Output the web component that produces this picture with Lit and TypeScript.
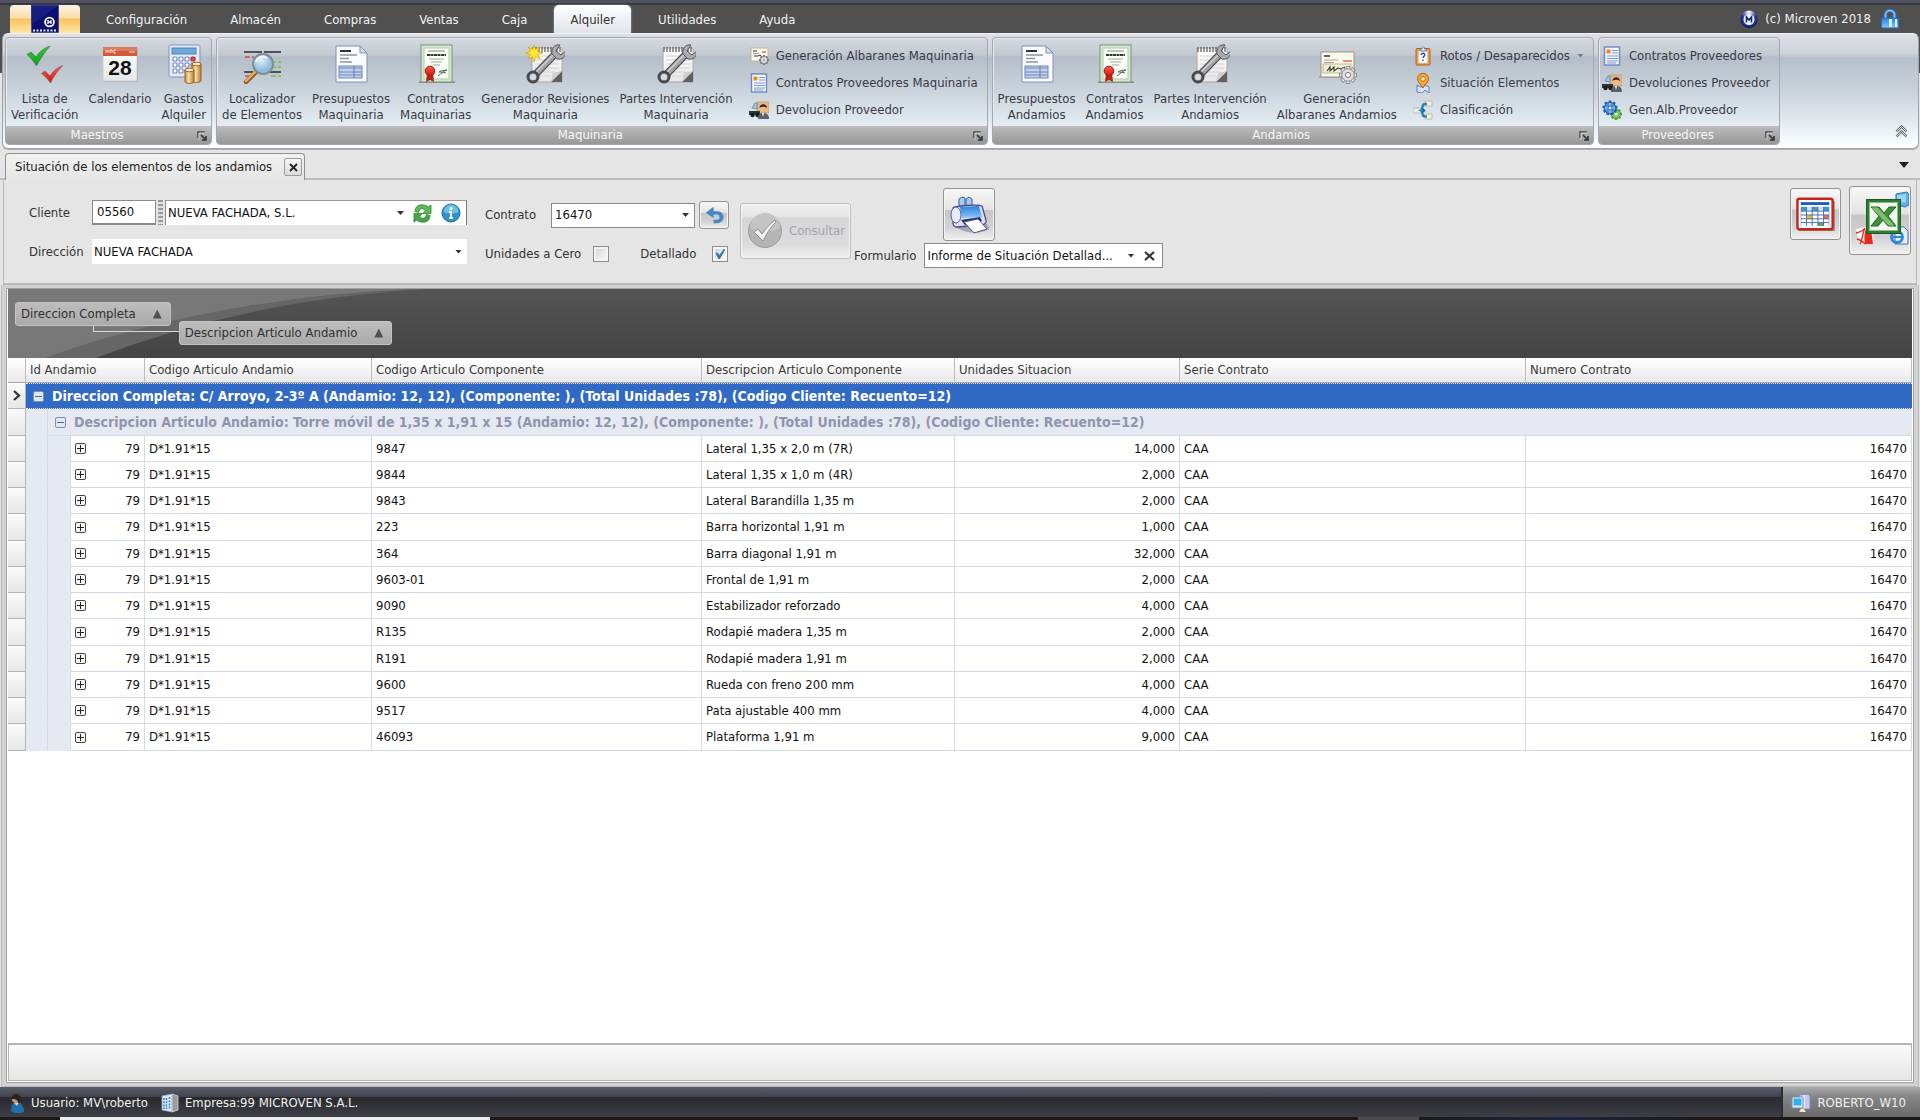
import { LitElement, html, svg, css, nothing, TemplateResult, SVGTemplateResult } from 'lit';
import { customElement, state } from 'lit/decorators.js';
import { classMap } from 'lit/directives/class-map.js';

interface Command { icon: string; lines: string[]; menu?: boolean; }
interface Group { title: string; large: Command[]; small: Command[]; }
interface Item { code: string; name: string; units: string; }

const MENU = ['Configuración', 'Almacén', 'Compras', 'Ventas', 'Caja', 'Alquiler', 'Utilidades', 'Ayuda'];

const GROUPS: Group[] = [
  {
    title: 'Maestros',
    large: [
      { icon: 'checks', lines: ['Lista de', 'Verificación'] },
      { icon: 'calendar', lines: ['Calendario'] },
      { icon: 'expenses', lines: ['Gastos', 'Alquiler'] },
    ],
    small: [],
  },
  {
    title: 'Maquinaria',
    large: [
      { icon: 'locator', lines: ['Localizador', 'de Elementos'] },
      { icon: 'quote', lines: ['Presupuestos', 'Maquinaria'] },
      { icon: 'contract', lines: ['Contratos', 'Maquinarias'] },
      { icon: 'wrenchNew', lines: ['Generador Revisiones', 'Maquinaria'] },
      { icon: 'wrench', lines: ['Partes Intervención', 'Maquinaria'] },
    ],
    small: [
      { icon: 'noteSmall', lines: ['Generación Albaranes Maquinaria'] },
      { icon: 'listSmall', lines: ['Contratos Proveedores Maquinaria'] },
      { icon: 'supplier', lines: ['Devolucion Proveedor'] },
    ],
  },
  {
    title: 'Andamios',
    large: [
      { icon: 'quote', lines: ['Presupuestos', 'Andamios'] },
      { icon: 'contract', lines: ['Contratos', 'Andamios'] },
      { icon: 'wrench', lines: ['Partes Intervención', 'Andamios'] },
      { icon: 'note', lines: ['Generación', 'Albaranes Andamios'] },
    ],
    small: [
      { icon: 'clipboard', lines: ['Rotos / Desaparecidos'], menu: true },
      { icon: 'pin', lines: ['Situación Elementos'] },
      { icon: 'tree', lines: ['Clasificación'] },
    ],
  },
  {
    title: 'Proveedores',
    large: [],
    small: [
      { icon: 'listSmall', lines: ['Contratos Proveedores'] },
      { icon: 'supplier', lines: ['Devoluciones Proveedor'] },
      { icon: 'gears', lines: ['Gen.Alb.Proveedor'] },
    ],
  },
];

const ITEMS: Item[] = [
  { code: '9847', name: 'Lateral 1,35 x 2,0 m (7R)', units: '14,000' },
  { code: '9844', name: 'Lateral 1,35 x 1,0 m (4R)', units: '2,000' },
  { code: '9843', name: 'Lateral Barandilla 1,35 m', units: '2,000' },
  { code: '223', name: 'Barra horizontal 1,91 m', units: '1,000' },
  { code: '364', name: 'Barra diagonal 1,91 m', units: '32,000' },
  { code: '9603-01', name: 'Frontal de 1,91 m', units: '2,000' },
  { code: '9090', name: 'Estabilizador reforzado', units: '4,000' },
  { code: 'R135', name: 'Rodapié madera 1,35 m', units: '2,000' },
  { code: 'R191', name: 'Rodapié madera 1,91 m', units: '2,000' },
  { code: '9600', name: 'Rueda con freno 200 mm', units: '4,000' },
  { code: '9517', name: 'Pata ajustable 400 mm', units: '4,000' },
  { code: '46093', name: 'Plataforma 1,91 m', units: '9,000' },
];

const gearTeeth = (cx: number, cy: number, r: number, n: number, fill: string, w: number) =>
  Array.from({ length: n }, (_, i) => svg`<rect x=${cx - w / 2} y=${cy - r} width=${w} height=${r} fill=${fill} transform="rotate(${(360 / n) * i} ${cx} ${cy})"/>`);

const notebook = svg`
  <path d="M7 4H37V38H7z" fill="url(#paper)" stroke="#a8a8a8"/>
  <path d="M8 3v5M11 3v5M14 3v5M17 3v5M20 3v5M23 3v5M26 3v5M29 3v5M32 3v5M35 3v5" stroke="#6b6b6b" stroke-width="1.4"/>
  <path d="M10 12h24M10 16h24M10 20h24M10 24h24M10 28h20M10 32h16" stroke="#d2d2d2"/>
  <path d="M37 27L26 38H37z" fill="#606060"/><path d="M37 27L26 38l2-9z" fill="#cfcfcf"/>
  <path d="M8 33L32 8" stroke="#4c4c50" stroke-width="7.5"/>
  <path d="M8 33L32 8" stroke="#a3a3a9" stroke-width="5"/>
  <path d="M8 31L31 8" stroke="#d0d0d5" stroke-width="1.4"/>
  <path d="M35 1c-6-1-9 4-8 9l5 5c5 1 9-2 9-8l-5 4-5-4z" fill="#aaaab0" stroke="#55555a"/>
  <circle cx="8" cy="33" r="5" fill="#c9cbd0" stroke="#4a4a4e" stroke-width="3"/>
  <circle cx="8" cy="33" r="2.6" fill="#d9dde2"/>`;

const ICONS: Record<string, SVGTemplateResult> = {
  checks: svg`
    <path d="M2 10.500L6 8l5 5C14 8 19 4 25 2 20 8 15 15 11.500 22 9 18 6 14 2 10.500z" fill="url(#green)" stroke="#4b7f4b" stroke-width=".7"/>
    <path d="M16.500 29.500L20 27l5 5c3-5 7-8 12.500-10.500C33 27 28.500 32 25.500 39 23 35 20 32 16.500 29.500z" fill="url(#red)" stroke="#a05050" stroke-width=".7"/>`,
  calendar: svg`
    <path d="M3 4H38V38H3z" fill="#8a8d92" opacity=".5"/>
    <path d="M3 3H37V37H3z" fill="url(#paper)" stroke="#c9c9c9" stroke-width=".8"/>
    <path d="M3 3H37V12H3z" fill="#cf5a3c"/><path d="M3 3H37V7H3z" fill="#de7a5e"/>
    <path d="M6 6v3M8 6v3M7 7h1M10 6v3M12 6v3M10 6h2M14 6h2M14 9h2M14 6v3M29 8h6" stroke="#f7d8cf"/>
    <text x="20" y="31" text-anchor="middle" font-family="Liberation Sans, sans-serif" font-weight="bold" font-size="21" fill="#111">28</text>`,
  expenses: svg`
    <rect x="5" y="1" width="31" height="32" rx="1.5" fill="#e4eaf6" stroke="#7d93c2"/>
    <rect x="8" y="4" width="24" height="6" fill="#6fa8d8" stroke="#4a86bd"/>
    ${[13, 19, 25].map((y) => [9, 15, 21, 27].map((x) => svg`<rect x=${x} y=${y} width="4" height="4" rx="1" fill=${x === 27 && y === 13 ? '#e04848' : '#fff'} stroke=${x === 27 && y === 13 ? '#b03030' : '#7389bd'} stroke-width="1.2"/>`))}
    <path d="M28 20v17c2 2 7 2 9 0V20z" fill="url(#gold)" stroke="#96662c"/><ellipse cx="32.500" cy="20" rx="4.500" ry="1.800" fill="#ffe9b0" stroke="#96662c"/>
    <path d="M21 26v12c2 2 7 2 9 0V26z" fill="url(#gold)" stroke="#96662c"/><ellipse cx="25.500" cy="26" rx="4.500" ry="1.800" fill="#ffe9b0" stroke="#96662c"/>`,
  locator: svg`
    <path d="M2 8h18M22 8h17M2 28h9M28 28h11" stroke="#2b2b2b" stroke-width="1.500"/>
    <path d="M3 13h9M3 32h6" stroke="#d84848" stroke-width="1.500" stroke-dasharray="5 2"/>
    <path d="M29 18h10M29 23h10M29 32h10" stroke="#72c83c" stroke-width="1.600" stroke-dasharray="5 2"/>
    <path d="M14 28L4 38" stroke="#8d5a20" stroke-width="4.500" stroke-linecap="round"/><path d="M14 27L4 37" stroke="#e0a85c" stroke-width="2.500" stroke-linecap="round"/>
    <circle cx="21" cy="20" r="10" fill="url(#lens)" stroke="#7f8c99" stroke-width="2"/>
    <path d="M14 18c1-5 7-7 11-4" stroke="#fff" stroke-width="2" fill="none" opacity=".8"/>`,
  quote: svg`
    <path d="M5 2H29l7 7V38H5z" fill="#f9fbff" stroke="#7f90b8"/>
    <path d="M29 2v7h7z" fill="#d5dded" stroke="#7f90b8"/>
    <path d="M9 7h11" stroke="#333" stroke-width="2"/><path d="M9 11h17M9 14.500h9M9 18h12" stroke="#8f959f" stroke-width="1.400"/>
    <rect x="8" y="22" width="23" height="12" fill="#c3d0ea" stroke="#7188bb"/>
    <path d="M8 24h23M8 28h23M8 31h23M23 22v12" stroke="#7188bb" stroke-width="1.200"/>`,
  contract: svg`
    <path d="M3 38h36" stroke="#7d8690" stroke-width="1.500"/>
    <rect x="5" y="1" width="31" height="37" fill="#d8e8d4" stroke="#6f9470"/>
    <rect x="8" y="4" width="25" height="31" fill="#fafdf8" stroke="#abc9a8"/>
    <path d="M12 7h17" stroke="#7c8a7c"/><path d="M11 11h19" stroke="#28402a" stroke-width="2.200" stroke-dasharray="3 .5"/>
    <path d="M13 15h15M15 18h11M17 21h7" stroke="#9aa79a" stroke-width="1.200"/>
    <path d="M22 32c4-3 6-5 9-6-3 0-7 1-8 2 2 0 4 0 7 1" stroke="#4f6350" fill="none"/>
    <path d="M11 28l-1 10 4-2 4 2-1-10z" fill="#b92417"/>
    <circle cx="14" cy="27" r="4.800" fill="url(#red)" stroke="#9c1d14"/>`,
  wrench: notebook,
  wrenchNew: svg`${notebook}
    <path d="M9 1l1.500 4.500L15 3l-2.500 4.500L18 9l-5.500 1.500L15 15l-4.500-2.500L9 18l-1.500-5.500L3 15l2.500-4.500L0 9l5.500-1.500L3 3l4.500 2.500z" fill="#ffe93a" stroke="#d8a800" stroke-width=".8"/>`,
  note: svg`
    <path d="M2 33h36" stroke="#909090"/>
    <rect x="4" y="8" width="33" height="25" fill="#fbf9ee" stroke="#98957e"/>
    <path d="M7 12h6" stroke="#333" stroke-width="1.600"/><path d="M7 16h14M7 18.500h10" stroke="#aaa68e"/><path d="M26 17h9" stroke="#f08a80" stroke-width="1.800"/>
    <rect x="6" y="20" width="28" height="9" fill="#f1ecd2" stroke="#bdb893"/>
    <path d="M10 27l3-4 0 4 4-4 0 4 4-3 3 1 4-2" stroke="#333" fill="none" stroke-width="1.100"/>
    ${gearTeeth(31, 31, 9, 8, '#8a8a8a', 4.4)}${gearTeeth(31, 31, 8, 8, '#e8e8e8', 2.8)}
    <circle cx="31" cy="31" r="6.300" fill="#dedede" stroke="#8a8a8a"/><circle cx="31" cy="31" r="2.500" fill="#fff" stroke="#777"/>`,
  noteSmall: svg`
    <rect x="2" y="2" width="17" height="13" fill="#fbf9ee" stroke="#b9b59a"/>
    <path d="M4 5h4M5 10h4l2-1 2 2" stroke="#333" fill="none"/><path d="M13 6h4" stroke="#ee6a5e" stroke-width="1.400"/><path d="M4 7.500h6" stroke="#999"/>
    ${gearTeeth(15, 14, 5, 8, '#7d7d7d', 2)}<circle cx="15" cy="14" r="3.500" fill="#e9e9e9" stroke="#777"/><circle cx="15" cy="14" r="1" fill="#888"/>`,
  listSmall: svg`
    <rect x="2.500" y="1" width="15" height="18" fill="#f3f7ff" stroke="#6c86c6" stroke-width="1.400"/>
    <rect x="4.500" y="3.500" width="4" height="4" fill="#ee8a1c"/>
    <path d="M10 4.500h6M10 7h6M5 10h11M5 12.500h11M5 15h11M5 17h9" stroke="#7f97cf"/>`,
  supplier: svg`
    <rect x="8" y="2" width="12" height="11" fill="#e3b987" stroke="#b78a58" stroke-width=".6"/>
    <path d="M3 8l3-5 2 0v6z" fill="#9cc6dd" stroke="#5e8ca8" stroke-width=".8"/>
    <path d="M0 11h11v4H0z" fill="#2e3338"/><circle cx="3.500" cy="15" r="2.200" fill="#1c1c1c"/><circle cx="8.500" cy="15" r="2.200" fill="#1c1c1c"/>
    <circle cx="14" cy="8.500" r="3.200" fill="#f0b98a"/><path d="M10.500 8c0-5 7.500-5 7.500 0-2-1-5-2-7.500 0z" fill="#38231a"/>
    <path d="M9 19c0-5 2-6 5-6s6 1 6 6z" fill="#5a5f68"/><path d="M13 13l1 4 1-4z" fill="#fff"/>`,
  clipboard: svg`
    <rect x="3" y="2.500" width="14" height="16.500" rx="1" fill="#e89a4a" stroke="#b8641c"/>
    <rect x="5.500" y="5" width="9" height="12" fill="#f6f8ff" stroke="#d9cbb8" stroke-width=".6"/>
    <path d="M7 5V3h2c0-3 2.500-3 2.500 0h2v2z" fill="#e4e8f2" stroke="#6a76a0" stroke-width=".9"/>
    <path d="M8.200 9c0-2.500 3.800-2.300 3.600 0 0 1.500-1.800 1.300-1.800 3M10 13.500v1.500" stroke="#2a4fb0" stroke-width="1.400" fill="none"/>`,
  pin: svg`
    <path d="M4 12l4 2 4-2 4 2v6l-4-3-3 3-5-1z" fill="#d5e2f4" stroke="#5c7fb8"/>
    <path d="M10 15C7 10 4.500 9 4.500 5.800a5.500 5.500 0 0 1 11 0C15.500 9 13 10 10 15z" fill="#f5a93a" stroke="#a8630e"/>
    <circle cx="10" cy="6" r="2.300" fill="#fff3d6" stroke="#b8700e"/>`,
  tree: svg`
    <path d="M0 8h8v5H0z" fill="#eceee4" stroke="#b0b4a6" stroke-width=".8"/><path d="M12 1h7v5h-7zM12 14h7v5h-7z" fill="#f4efdc" stroke="#b8b296" stroke-width=".8"/>
    <path d="M14 4h-2c-4 0-1.500 5.500-4 6.500 2.500 1 0 6 4 6h2" stroke="#2488b8" stroke-width="2.400" fill="none"/><path d="M9 7.500l4 3-4 3z" fill="#1b6fa5"/>`,
  gears: svg`
    ${gearTeeth(14, 14, 6, 8, '#4d9c34', 2.4)}<circle cx="14" cy="14" r="4.500" fill="#7ccb58" stroke="#3f8a2a" stroke-width=".8"/><circle cx="14" cy="14" r="1.600" fill="#eaf7e2"/>
    ${gearTeeth(8, 8, 7.5, 9, '#2563b4', 2.6)}<circle cx="8" cy="8" r="5.800" fill="#4a8fdc" stroke="#1c4f98" stroke-width=".8"/><path d="M8 3v10M3 8h10" stroke="#bcdcff"/><circle cx="8" cy="8" r="2" fill="#fff" stroke="#2a62b0"/>`,
  logo: svg`
    <rect x="0" y="0" width="28" height="28" fill="#0a0f72" stroke="#8b8fb4"/>
    <path d="M0 0H28L0 20z" fill="#1e2a8c" opacity=".6"/>
    <circle cx="18.500" cy="17" r="4.400" fill="#0a0f72" stroke="#fff" stroke-width="1.800"/><path d="M17 19v-4M20 19v-4M17 17h3" stroke="#fff" stroke-width="1.300"/>
    <path d="M2 25.500h24" stroke="#e8e8f5" stroke-width="1.800" stroke-dasharray="2 1.500"/>`,
  brand: svg`
    <circle cx="10" cy="10.500" r="8.500" fill="#0d1a58"/><circle cx="10" cy="9.500" r="8" fill="url(#ball)"/>
    <circle cx="10" cy="10.500" r="5.500" fill="#eef1fb"/><path d="M7.500 13.500V8l2.500 3 2.500-3v5.500" stroke="#15267a" stroke-width="1.600" fill="none"/>`,
  lock: svg`
    <path d="M5.500 10V6a4.500 4.500 0 0 1 9 0V10" stroke="#2f78c4" stroke-width="3.600" fill="none"/><path d="M5.500 10V6a4.500 4.500 0 0 1 9 0V10" stroke="#8cc8f4" stroke-width="1.600" fill="none"/>
    <rect x="1.500" y="9" width="17" height="10" rx="1.500" fill="url(#blue)" stroke="#2272b8"/><path d="M9 10h3v8H9zM15 10h2v8h-2z" fill="#d9f0ff"/>`,
  launcher: svg`<path d="M1 7V1h7" stroke="#444" fill="none" stroke-width="1.400"/><path d="M4 4l5 5M9 5v4H5" stroke="#333" fill="none" stroke-width="1.600"/><path d="M2 8.500V2h6.500" stroke="#e8e8e8" fill="none" stroke-width=".7"/>`,
  refresh: svg`
    <path d="M2 8C2 3 6 0 11 1c2 0 4 1 5 2l3-2v9h-9l3-3C10 4 7 4 6 9z" fill="#5cb85a" stroke="#2d8a35" stroke-width=".8"/>
    <path d="M18 12c0 5-4 8-9 7-2 0-4-1-5-2l-3 2v-9h9l-3 3c3 3 6 3 7-2z" fill="#43a346" stroke="#2d8a35" stroke-width=".8"/>`,
  info: svg`
    <circle cx="10" cy="10" r="9" fill="#2f93c9" stroke="#1d6a98"/><path d="M2.500 9a7.500 7.500 0 0 1 15 0c-5 2-10 2-15 0z" fill="#6cc0e6"/>
    <circle cx="10" cy="5.500" r="1.500" fill="#fff"/><path d="M8 9h3M10 8.500V15M8 15h4" stroke="#fff" stroke-width="1.800" fill="none"/>`,
  undo: svg`<path d="M11 1L2 8l9 6v-4h4c4 0 4 6 0 6h-4v4h5c9-1 9-14-1-14h-4z" fill="#4a86c5"/>`,
  confirm: svg`
    <circle cx="18" cy="18" r="16.500" fill="#b4b4b4" stroke="#9a9a9a"/><path d="M3 15a15 15 0 0 1 30 0c-9 4-21 5-30 0z" fill="#c4c4c4"/>
    <path d="M7 19l4-3 4 5C19 15 23 11 28 7l1 2c-6 6-9 11-13 19z" fill="#f1f1f1" stroke="#8d8d8d" stroke-width="1"/>`,
  printer: svg`
    <path d="M7 31c7 6 24 8 34 2l-4-6z" fill="#6f6f8c" opacity=".5"/>
    <path d="M10 14V3l3-2 3 1v9M17 11V3l3-2 3 2v10z" fill="#a8cbf2" stroke="#3c5ea0"/>
    <path d="M4 12c2-2 24-4 29-2l4 14c1 3-2 5-5 5L8 31c-3 0-4-2-4-4z" fill="#dcdff4" stroke="#4a4a88" stroke-width="1.300"/>
    <path d="M11 11l19-1 3 11-20 1z" fill="url(#blue)"/>
    <ellipse cx="7" cy="19" rx="5" ry="8" fill="#e9ebfb" stroke="#5a5a98"/>
    <path d="M12 24l19-3 2 4-17 4z" fill="#28306a"/>
    <path d="M15 26l14-3 9 10-13 4z" fill="#fafaff" stroke="#56568c"/>`,
  schedule: svg`
    <path d="M3 34.500h37V4" stroke="#6a3a34" stroke-width="1.500" fill="none" opacity=".6"/>
    <rect x="1.500" y="1.500" width="37" height="32" rx="2" fill="#fff" stroke="#c4281c" stroke-width="2.600"/>
    <rect x="5" y="5" width="30" height="3" fill="#1e5cb8"/><rect x="5" y="10" width="30" height="20" fill="#4a6fb0"/>
    ${[10, 15, 19, 23, 27].map((y, r) => [5, 11, 17, 23, 29].map((x, c) => svg`<rect x=${x + 0.5} y=${y} width="5" height=${r === 0 ? 4 : 3} fill=${r === 0 ? (c % 2 ? '#cfe4f4' : '#3d9bc4') : r === 2 && c === 1 ? '#e8c020' : r === 2 && c === 4 ? '#ee6a5e' : r === 4 && c === 3 ? '#58b040' : '#fff'}/>`))}`,
  exporter: svg`
    <path d="M45 3l11-2 2 2v11l-4 2-9-2z" fill="#5cb0e8" stroke="#2d78b8"/><path d="M46 4l9-1v8l-9 1z" fill="#9ad6fa"/>
    <path d="M5 38l9-2 8 1v16H8z" fill="#fff" stroke="#ddd" stroke-width=".6"/><path d="M15 38l5 0 2 15-8 0c-1-6-1-10 1-15z" fill="#e8291c"/><path d="M5 42c4-1 8-3 9-5-3 6-2 11-5 16M6 48c3 1 6 2 8 5" stroke="#e8291c" stroke-width="1.400" fill="none"/>
    <path d="M44 36h9l4 4v13H44z" fill="#e8f0ff" stroke="#4a6cb8"/><circle cx="46" cy="46" r="5.500" fill="none" stroke="#3088d8" stroke-width="2.800"/><path d="M41 46h10" stroke="#3088d8" stroke-width="2"/>
    <rect x="15.500" y="8.500" width="34" height="34" fill="#2f7d34" stroke="#1f5a24"/><rect x="18.500" y="11.500" width="28" height="28" fill="#f2f8ef" stroke="#8ab888"/>
    <path d="M20 16h8l5 6 5-6h7l-8 9 8 10h-8l-5-6-5 6h-7l8-10z" fill="#3f8f3c" stroke="#246428"/><path d="M20.500 16.500h6l17 18h-6z" fill="#7cbf6c"/>`,
  person: svg`<path d="M2 18c0-6 2-9 6-9s7 4 7 10c-4 2-10 2-13-1z" fill="#1f6fa8"/><path d="M5 10l3 3 2-4z" fill="#c8d4de"/><circle cx="7" cy="6" r="4" fill="#c79270"/><path d="M3 6c-1-6 8-7 9-1 0 3-1 5-3 5 0-3-2-4-6-4z" fill="#2e2018"/>`,
  company: svg`<path d="M1 3l10-2v18L1 17z" fill="#dfe9f5" stroke="#8fa5bf" stroke-width=".8"/><path d="M11 1l6 2v14l-6 2z" fill="#9c9c9c" stroke="#d8d8d8" stroke-width=".8"/><path d="M3 5v11M5.500 5v11M8.500 4v12" stroke="#3a86cc" stroke-width="1.600" stroke-dasharray="2 1.200"/>`,
  machine: svg`<path d="M8 2l9-1 2 2v13H9z" fill="#c4caee" stroke="#7a80b8" stroke-width=".8"/><path d="M13 2v13" stroke="#fff"/><rect x="1" y="4" width="11" height="11" rx="1" fill="#e6ecfa" stroke="#7a88b8"/><rect x="2.500" y="5.500" width="8" height="7" fill="#2fb4ea"/><path d="M8 19l2-3h3l2 3z" fill="#f2e6b8"/>`,
};

@customElement('app-root')
export class AppRoot extends LitElement {
  @state() private activeMenu = 'Alquiler';

  static styles = css`
    :host { display: block; }
    * { box-sizing: border-box; }
    button, input, select, table { font: inherit; color: inherit; }
    button { background: none; border: 0; padding: 0; margin: 0; }
    svg { display: block; flex: none; }
    .defs { position: absolute; width: 0; height: 0; }
    .app {
      min-height: 100vh; display: flex; flex-direction: column; background: #e5e5e5;
      font: 13px/16px "DejaVu Sans Condensed", "DejaVu Sans", sans-serif; color: #333; white-space: nowrap;
    }
    .edge { height: 5px; background: linear-gradient(#50525f 0 3px, #363940 3px); }

    .menubar { height: 28px; display: flex; align-items: flex-end; background: #505050; color: #f2f2f2; padding: 0 20px 0 10px; }
    .home { width: 70px; height: 28px; display: flex; justify-content: center; border-radius: 4px 4px 0 0; background: linear-gradient(#fdf3e2 0, #fbdcab 13px, #fbc35c 14px, #ffe6a6); }
    .tabs { display: flex; gap: 11px; margin-left: 10px; align-self: stretch; }
    .tab { padding: 2px 16px 0; height: 28px; border-radius: 5px 5px 0 0; }
    .tab.active { background: linear-gradient(#ffffff, #dfe3ea); color: #333; box-shadow: 0 0 2px #9fc4d4; }
    .brand { margin-left: auto; align-self: center; display: flex; align-items: center; gap: 6px; }
    .brand a { color: inherit; text-decoration: none; margin-right: 3px; }

    .ribbonBack { background: linear-gradient(#505050 40px, #e5e5e5 40px); }
    .ribbon {
      height: 116px; margin: 0 1px 0 2px; padding: 3px 2px; display: flex; gap: 4px; border: 1px solid #9da3ac; border-top-color: #f2f2f6; border-radius: 6px;
      background: linear-gradient(#dfdfe6, #cdd2d9 20px, #b6bec9 24px, #cbd3dc 60px, #eef4f8 100px, #fff);
      color: #3a3a46; box-shadow: 0 1px 0 #b0b0b4;
    }
    .group { display: flex; flex-direction: column; border: 1px solid #a4a8b0; border-radius: 4px; overflow: hidden; box-shadow: inset 1px 1px 0 #e6e9ee; background: linear-gradient(#d5d9df, #c3c9d1 17px, #b5bdc8 19px, #c9d1da 50px, #e3edf2 88px); }
    .commands { flex: 1; display: flex; }
    .large { display: flex; flex-direction: column; align-items: center; padding: 6px 5px 0; text-align: center; gap: 7px; }
    .small { display: flex; flex-direction: column; padding: 4px 7px 0 1px; }
    .large + .small { padding-left: 9px; }
    .smallCommand { display: flex; align-items: center; gap: 7px; height: 27px; padding: 0 2px; }
    .caret { width: 7px; height: 4px; background: #7c7c84; clip-path: polygon(0 0, 100% 0, 50% 100%); }
    .caption { height: 18px; display: flex; align-items: center; background: linear-gradient(#bcbcbc, #979797); color: #f6f6f6; }
    .captionText { flex: 1; text-align: center; }
    .launcher { padding: 2px 4px 0 9px; }
    .collapse { margin: auto 8px 7px auto; }

    .documents { height: 31px; padding: 4px 11px 0 5px; display: flex; align-items: flex-start; border-bottom: 2px solid #bfbfbf; }
    .document { height: 27px; display: flex; align-items: center; gap: 12px; padding: 0 2px 0 9px; color: #222; border: 1px solid #8f8f8f; border-bottom: 0; border-radius: 4px 4px 0 0; background: linear-gradient(#f2f2f2, #e5e5e5); }
    .close { width: 18px; height: 18px; display: grid; place-items: center; border: 1px solid #9a9a9a; border-radius: 2px; background: linear-gradient(#f4f4f4, #dcdcdc); }
    .documentsMenu { width: 10px; height: 6px; margin: 9px 0 0 auto; background: #222; clip-path: polygon(0 0, 100% 0, 50% 100%); }

    .filters { height: 105px; margin: 0 3px; padding: 0 5px 0 25px; display: flex; align-items: flex-start; border: 1px solid #b9b9b9; border-width: 0 1px 2px 1px; }
    .client { display: grid; grid-template-columns: 63px 375px; row-gap: 14px; align-items: center; padding-top: 20px; }
    .clientPair { display: flex; gap: 2px; height: 25px; }
    .code { width: 64px; padding: 0 4px; border: 1px solid #8a8a8a; border-width: 1px 1px 2px; background: #fff; color: #111; outline: 0; border-radius: 0; }
    .grip { width: 5px; background: repeating-linear-gradient(#999 0 2px, #ddd 2px 4px); }
    .combo { position: relative; display: flex; align-items: center; flex: 1; height: 25px; background: #fff; color: #111; padding-right: 5px; }
    .combo.framed { border: 1px solid #8a8a8a; }
    .combo.lined { border-top: 1px solid #999; border-right: 1px solid #777; border-left: 1px solid #888; }
    .combo select { appearance: none; border: 0; outline: 0; background: none; padding: 0 2px; flex: 1; height: 100%; min-width: 0; }
    .combo .caret { background: #333; pointer-events: none; }
    .iconButton { margin-left: 9px; }
    .contract { display: grid; row-gap: 11px; padding: 21px 0 0 18px; }
    .contractLine { display: flex; align-items: center; height: 28px; }
    .contractLine .combo { flex: none; width: 144px; margin-left: 15px; }
    .contractLine .combo select { padding-left: 3px; }
    .push { border: 1px solid #939393; border-radius: 3px; display: grid; place-items: center; background: linear-gradient(#f8f8f8, #e3e3e3 40%, #c6c6c8 42%, #d2d2d4 75%, #f1f1f1); box-shadow: inset 0 0 0 1px #f4f4f4; }
    .undo { width: 30px; height: 28px; margin-left: 4px; }
    .tick { appearance: none; width: 16px; height: 16px; margin: 0 0 0 12px; border: 1px solid #8d8d8d; background: linear-gradient(135deg, #cfcfcf, #fff); box-shadow: inset 0 0 0 2px #f4f4f4; display: grid; place-items: center; }
    .tick:checked::before { content: ""; width: 10px; height: 10px; background: #2f74bd; clip-path: polygon(0 40%, 20% 35%, 40% 60%, 85% 0, 100% 5%, 45% 100%, 30% 100%); }
    .detail { margin-left: 31px; }
    .detailTick { margin-left: 16px; }
    .consult { width: 111px; height: 56px; margin: 23px 0 0 11px; display: flex; align-items: center; gap: 6px; padding-left: 6px; border-color: #bdbdbd; color: #a3a3a3; background: linear-gradient(#f0f0f0, #e4e4e4 24%, #d6d6d8 26%, #dcdcde 75%, #efefef); }
    .report { display: grid; grid-template-columns: auto 239px; column-gap: 8px; align-items: center; padding: 8px 0 0 3px; row-gap: 2px; }
    .print { grid-column: 2; width: 52px; height: 53px; margin-left: 19px; }
    .clear { margin: 0 2px 0 10px; }
    .exports { margin-left: auto; display: flex; gap: 8px; align-items: flex-start; padding-top: 6px; }
    .schedule { width: 51px; height: 52px; margin-top: 2px; }
    .exporter { width: 62px; height: 69px; }

    .frame { flex: 1; display: flex; margin: 0 1px; padding: 3px 4px; border: 1px solid #b9b9b9; border-width: 0 1px 1px; background: #d2d2d2; }
    .gridBox { flex: 1; min-width: 0; display: flex; flex-direction: column; border: 1px solid #a2a2a2; background: #fff; padding: 0 1px; }
    .groupPanel { position: relative; height: 69px; display: flex; align-items: flex-start; gap: 8px; padding: 13px 7px; background: linear-gradient(#545454, #444); overflow: hidden; }
    .swoosh { position: absolute; left: 0; top: 0; }
    .chip { position: relative; height: 24px; display: flex; align-items: center; justify-content: space-between; gap: 17px; padding: 0 8px 0 5px; border: 1px solid #c4c4c4; border-radius: 3px; background: linear-gradient(#bdbdbd, #a9a9a9); color: #303030; }
    .chip.second { margin-top: 19px; }
    .joint { position: absolute; left: 85px; top: 37px; width: 87px; height: 6px; border: solid #d8d8d8; border-width: 0 0 1px 1px; }
    .sort { width: 9px; height: 9px; background: #505050; clip-path: polygon(50% 0, 100% 100%, 0 100%); }

    .grid { width: 100%; table-layout: fixed; border-spacing: 0; color: #111; }
    .c0 { width: 18px; } .c1 { width: 22px; } .c2 { width: 23px; } .c3 { width: 74px; } .c4 { width: 227px; }
    .c5 { width: 330px; } .c6 { width: 253px; } .c7 { width: 225px; } .c8 { width: 346px; }
    .grid th { height: 25px; padding: 0 4px; text-align: left; font-weight: normal; color: #3a3a3a; border-right: 1px solid #bcbcbc; border-bottom: 1px solid #a8a8a8; background: linear-gradient(#ffffff, #e9e9e9); }
    .grid td { height: 26px; padding: 0 4px; border-right: 1px solid #d2d9e9; border-bottom: 1px solid #d2d9e9; background: #fff; overflow: hidden; }
    .grid tbody tr:nth-child(4n + 2) td { height: 27px; }
    .grid .marker { padding: 0 0 0 5px; border-color: #b4b4b4; background: linear-gradient(#fbfbfb, #e6e6e6); }
    .grid .indent { padding: 0; background: #e6e9f2; border-bottom-color: #e6e9f2; }
    .grid .number { text-align: right; }
    .grid .groupRow { font-weight: bold; font-size: 14px; border-right: 0; }
    .grid .outer { background: #316ac5; color: #fff; border: 1px dotted #dbe6f8; border-width: 1px 0; }
    .grid .inner { background: #e6e9f2; color: #9094ad; }
    .groupTitle { display: flex; align-items: center; gap: 8px; padding-left: 3px; }
    .idCell { display: flex; align-items: center; justify-content: space-between; }
    .toggle { width: 11px; height: 11px; display: grid; place-items: center; border: 1px solid #444; border-radius: 2px; background: #f6f6f6; color: #222; }
    .outer .toggle, .inner .toggle { border-color: #7f8fae; color: #53688e; background: #dfe7f3; }
    .summary { height: 38px; margin: auto 0 1px; border: 1px solid #b4b4b4; border-width: 2px 1px 1px; background: linear-gradient(#fafafa, #e6e6e6); }

    .status { height: 30px; display: flex; align-items: stretch; color: #f0f0f0; background: linear-gradient(#5a5d6b, #40434e 10px, #292a2e 10px, #3e3f45); }
    .statusItem { display: flex; align-items: center; gap: 6px; padding: 2px 4px 0 9px; }
    .host { margin-left: auto; padding: 2px 14px 0 8px; background: linear-gradient(#aaaaaa, #858585 10px, #6a6a6a); border-left: 2px solid #2c2c30; }
    .taskbar { height: 3px; background: linear-gradient(90deg, #1c1917 60px, #ececec 60px 490px, #1c1917 490px 1358px, #4d4b4a 1358px 1419px, #1c1917 1419px, #1c2740 1560px, #1c1917 1700px); }
  `;

  private icon(name: string, w: number, h = w, box = `0 0 ${w} ${h}`): TemplateResult {
    return html`<svg width=${w} height=${h} viewBox=${box} aria-hidden="true">${ICONS[name]}</svg>`;
  }

  private renderGroup(group: Group) {
    return html`
      <section class="group">
        <div class="commands">
          ${group.large.map((c) => html`
            <button class="large">
              ${this.icon(c.icon, 40)}
              <span>${c.lines.map((line, i) => html`${i ? html`<br />` : nothing}${line}`)}</span>
            </button>`)}
          ${group.small.length ? html`
            <div class="small">
              ${group.small.map((c) => html`
                <button class="smallCommand">${this.icon(c.icon, 20)}<span>${c.lines[0]}</span>${c.menu ? html`<i class="caret"></i>` : nothing}</button>`)}
            </div>` : nothing}
        </div>
        <div class="caption">
          <span class="captionText">${group.title}</span>
          <button class="launcher" aria-label="Opciones de ${group.title}">${this.icon('launcher', 10)}</button>
        </div>
      </section>`;
  }

  private toggle(open: boolean) {
    return html`<button class="toggle" aria-label=${open ? 'Contraer' : 'Expandir'}>
      <svg width="7" height="7" viewBox="0 0 7 7"><path d=${open ? 'M0 3.5h7' : 'M0 3.5h7M3.5 0v7'} stroke="currentColor"/></svg>
    </button>`;
  }

  private renderGrid() {
    const heads = ['Codigo Articulo Andamio', 'Codigo Articulo Componente', 'Descripcion Articulo Componente', 'Unidades Situacion', 'Serie Contrato', 'Numero Contrato'];
    return html`
      <table class="grid">
        <colgroup>${[0, 1, 2, 3, 4, 5, 6, 7, 8].map((n) => html`<col class="c${n}" />`)}<col /></colgroup>
        <thead><tr><th></th><th colspan="3">Id Andamio</th>${heads.map((h) => html`<th>${h}</th>`)}</tr></thead>
        <tbody>
          <tr>
            <td class="marker"><svg width="8" height="11" viewBox="0 0 8 11"><path d="M1 1l5 4.500-5 4.500" fill="none" stroke="#333" stroke-width="2.200"/></svg></td>
            <td class="groupRow outer" colspan="9"><div class="groupTitle">${this.toggle(true)}Direccion Completa: C/ Arroyo, 2-3º A (Andamio: 12, 12), (Componente: ), (Total Unidades :78), (Codigo Cliente: Recuento=12)</div></td>
          </tr>
          <tr>
            <td class="marker"></td><td class="indent"></td>
            <td class="groupRow inner" colspan="8"><div class="groupTitle">${this.toggle(true)}Descripcion Articulo Andamio: Torre móvil de 1,35 x 1,91 x 15 (Andamio: 12, 12), (Componente: ), (Total Unidades :78), (Codigo Cliente: Recuento=12)</div></td>
          </tr>
          ${ITEMS.map((item) => html`
            <tr>
              <td class="marker"></td><td class="indent"></td><td class="indent"></td>
              <td><div class="idCell">${this.toggle(false)}<span>79</span></div></td>
              <td>D*1.91*15</td><td>${item.code}</td><td>${item.name}</td>
              <td class="number">${item.units}</td><td>CAA</td><td class="number">16470</td>
            </tr>`)}
        </tbody>
      </table>`;
  }

  private renderFilters() {
    return html`
      <form class="filters" @submit=${(e: Event) => e.preventDefault()}>
        <div class="client">
          <label for="client">Cliente</label>
          <div class="clientPair">
            <input class="code" id="client" value="05560" />
            <i class="grip"></i>
            <div class="combo lined">
              <select aria-label="Nombre del cliente"><option>NUEVA FACHADA, S.L.</option></select><i class="caret"></i>
              <button class="iconButton" type="button" aria-label="Refrescar">${this.icon('refresh', 19, 19, '0 0 20 20')}</button>
              <button class="iconButton" type="button" aria-label="Información">${this.icon('info', 20)}</button>
            </div>
          </div>
          <label for="address">Dirección</label>
          <div class="combo"><select id="address"><option>NUEVA FACHADA</option></select><i class="caret"></i></div>
        </div>
        <div class="contract">
          <div class="contractLine">
            <label for="contract">Contrato</label>
            <div class="combo framed"><select id="contract"><option>16470</option></select><i class="caret"></i></div>
            <button class="push undo" type="button" aria-label="Deshacer">${this.icon('undo', 20, 18, '0 0 23 21')}</button>
          </div>
          <div class="contractLine">
            <label for="zero">Unidades a Cero</label><input class="tick" id="zero" type="checkbox" />
            <label class="detail" for="detail">Detallado</label><input class="tick detailTick" id="detail" type="checkbox" checked />
          </div>
        </div>
        <button class="push consult" type="button" disabled>${this.icon('confirm', 36)}Consultar</button>
        <div class="report">
          <button class="push print" type="button" aria-label="Imprimir">${this.icon('printer', 40, 38)}</button>
          <label for="form">Formulario</label>
          <div class="combo framed">
            <select id="form"><option>Informe de Situación Detallad...</option></select><i class="caret"></i>
            <button class="clear" type="button" aria-label="Quitar formulario"><svg width="11" height="10" viewBox="0 0 11 10"><path d="M1 1l9 8M10 1L1 9" stroke="#333" stroke-width="2.200"/></svg></button>
          </div>
        </div>
        <div class="exports">
          <button class="push schedule" type="button" aria-label="Calendario">${this.icon('schedule', 39, 35, '0 0 41 36')}</button>
          <button class="push exporter" type="button" aria-label="Exportar">${this.icon('exporter', 58, 60)}</button>
        </div>
      </form>`;
  }

  render() {
    return html`
      <svg class="defs" aria-hidden="true"><defs>
        <linearGradient id="paper" x1="0" y1="0" x2="0" y2="1"><stop offset="0" stop-color="#fff"/><stop offset="1" stop-color="#e6e6e6"/></linearGradient>
        <linearGradient id="green" x1="0" y1="0" x2="0" y2="1"><stop offset="0" stop-color="#2fd03a"/><stop offset="1" stop-color="#0c9a1c"/></linearGradient>
        <linearGradient id="red" x1="0" y1="0" x2="0" y2="1"><stop offset="0" stop-color="#ff5a4a"/><stop offset="1" stop-color="#d01410"/></linearGradient>
        <linearGradient id="gold"><stop offset="0" stop-color="#c88a3c"/><stop offset=".4" stop-color="#fbe0a8"/><stop offset="1" stop-color="#b87a30"/></linearGradient>
        <linearGradient id="blue" x1="0" y1="0" x2="0" y2="1"><stop offset="0" stop-color="#2a7fe0"/><stop offset="1" stop-color="#8cc8fa"/></linearGradient>
        <radialGradient id="lens" cx=".4" cy=".3"><stop offset="0" stop-color="#e2f3fb"/><stop offset="1" stop-color="#8fbfdf"/></radialGradient>
        <radialGradient id="ball" cx=".5" cy=".1"><stop offset="0" stop-color="#ffffff"/><stop offset="1" stop-color="#24348c"/></radialGradient>
      </defs></svg>
      <div class="app">
        <div class="edge"></div>
        <header class="menubar">
          <button class="home" aria-label="Inicio">${this.icon('logo', 28)}</button>
          <nav class="tabs">
            ${MENU.map((m) => html`<button class=${classMap({ tab: true, active: m === this.activeMenu })} @click=${() => { this.activeMenu = m; }}>${m}</button>`)}
          </nav>
          <div class="brand">${this.icon('brand', 20)}<a href="#">(c) Microven 2018</a>${this.icon('lock', 20)}</div>
        </header>
        <div class="ribbonBack"><div class="ribbon">
          ${GROUPS.map((g) => this.renderGroup(g))}
          <button class="collapse" aria-label="Contraer cinta"><svg width="13" height="13" viewBox="0 0 13 13"><path d="M1.500 6.500l5-5 5 5M1.500 11.500l5-5 5 5" fill="none" stroke="#666" stroke-width="2.400"/><path d="M1.500 6.500l5-5 5 5M1.500 11.500l5-5 5 5" fill="none" stroke="#f2f2f2" stroke-width=".8"/></svg></button>
        </div></div>
        <div class="documents">
          <div class="document">Situación de los elementos de los andamios
            <button class="close" aria-label="Cerrar"><svg width="9" height="9" viewBox="0 0 9 9"><path d="M1 1l7 7M8 1L1 8" stroke="#222" stroke-width="1.800"/></svg></button>
          </div>
          <button class="documentsMenu" aria-label="Documentos"></button>
        </div>
        ${this.renderFilters()}
        <main class="frame">
          <div class="gridBox">
            <div class="groupPanel">
              <svg class="swoosh" width="460" height="70" viewBox="0 0 460 70"><path d="M0 0H420Q240 10 85 70H0z" fill="#666"/><path d="M0 0H400Q200 10 34 70H0z" fill="#787878"/></svg>
              <i class="joint"></i>
              <button class="chip">Direccion Completa <i class="sort"></i></button>
              <button class="chip second">Descripcion Articulo Andamio <i class="sort"></i></button>
            </div>
            ${this.renderGrid()}
            <div class="summary"></div>
          </div>
        </main>
        <footer class="status">
          <div class="statusItem">${this.icon('person', 16, 20)}Usuario: MV\\roberto</div>
          <div class="statusItem">${this.icon('company', 18, 20)}Empresa:99 MICROVEN S.A.L.</div>
          <div class="statusItem host">${this.icon('machine', 20)}ROBERTO_W10</div>
        </footer>
        <div class="taskbar"></div>
      </div>`;
  }
}
